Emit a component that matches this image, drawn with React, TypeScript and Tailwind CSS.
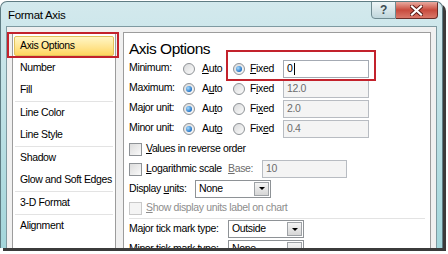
import React from "react";

const navItems = [
    { label: "Axis Options", active: true },
    { label: "Number" },
    { label: "Fill", sep: true },
    { label: "Line Color" },
    { label: "Line Style", sep: true },
    { label: "Shadow" },
    { label: "Glow and Soft Edges", sep: true },
    { label: "3-D Format", sep: true },
    { label: "Alignment" },
];

const Radio = ({ checked }: { checked?: boolean }) => (
    <span className="w-[12px] h-[12px] shrink-0 rounded-full border border-[#8e9296] bg-linear-to-br from-[#d9dadb] to-[#fbfbfb] flex items-center justify-center">
        {checked && (
            <span className="w-[6px] h-[6px] rounded-full bg-[radial-gradient(circle_at_35%_35%,#a7dcff,#1a6cc0_75%)]" />
        )}
    </span>
);

const Check = ({ disabled }: { disabled?: boolean }) => (
    <span
        className={
            disabled
                ? "w-[13px] h-[13px] shrink-0 border border-[#c9c9c9] bg-[#f4f4f4]"
                : "w-[13px] h-[13px] shrink-0 border border-[#8e9296] bg-linear-to-br from-[#dcdcdc] to-[#fafafa]"
        }
    />
);

const TextBox = ({ value, disabled, w = "w-[86px]" }: { value: string; disabled?: boolean; w?: string }) => (
    <div
        className={`${w} h-[18px] border flex items-center pl-[3px] ${
            disabled ? "border-[#b8bcc2] bg-[#f4f4f4] text-[#6d6d6d]" : "border-[#a4aab3] bg-white text-black"
        }`}
    >
        {value}
        {!disabled && <span className="w-[1px] h-[12px] bg-black ml-[1px]" />}
    </div>
);

const Select = ({ value }: { value: string }) => (
    <div className="w-[76px] h-[18px] border border-[#8e9296] bg-white flex items-center justify-between pl-[3px] pr-[1px]">
        <span>{value}</span>
        <span className="w-[15px] h-[14px] border border-[#9ea2a6] bg-linear-to-b from-[#f4f4f4] to-[#d6d6d6] flex items-center justify-center">
            <span className="w-0 h-0 border-l-[3px] border-r-[3px] border-t-[3px] border-l-transparent border-r-transparent border-t-black" />
        </span>
    </div>
);

const AutoFixed = ({
    label,
    autoLabel,
    fixedLabel,
    fixed,
    value,
}: {
    label: string;
    autoLabel: React.ReactNode;
    fixedLabel: React.ReactNode;
    fixed?: boolean;
    value: string;
}) => (
    <div className="h-[20px] flex items-center">
        <span className="w-[54px] mb-[3px]">{label}</span>
        <div className="w-[50px] flex items-center gap-[7px]">
            <Radio checked={!fixed} />
            <span>{autoLabel}</span>
        </div>
        <div className="w-[50px] flex items-center gap-[5px]">
            <Radio checked={fixed} />
            <span>{fixedLabel}</span>
        </div>
        <TextBox value={value} disabled={!fixed} />
    </div>
);

const App = () => {
    return (
        <div className="relative w-[448px] h-[254px] bg-white overflow-hidden whitespace-nowrap text-[10.5px] tracking-[-0.35px] text-black font-['Liberation_Sans',Arial,sans-serif]">
            <div className="mt-[1px] w-[443px] h-[247px] rounded-t-[7px] border border-b-0 border-[#5f7c83] bg-linear-to-b from-[#d3e9ed] to-[#a3d6db] shadow-[3px_3px_0_#3b3b3b] flex flex-col overflow-hidden">
                {/* title bar */}
                <div className="h-[24px] flex items-start justify-between pl-[7px] pr-[4px]">
                    <span className="pt-[5px] text-[11.5px] tracking-[-0.3px]">Format Axis</span>
                    <div className="flex">
                        <div className="w-[25px] h-[18px] -mt-[1px] border border-[#6f8a91] rounded-bl-[4px] bg-linear-to-b from-[#eef5f7] to-[#bfd6dc] flex items-center justify-center text-[12px] font-bold text-[#3d4b52]">
                            ?
                        </div>
                        <div className="w-[42px] h-[18px] -mt-[1px] border border-l-0 border-[#6a2b26] rounded-br-[4px] bg-linear-to-b from-[#e8a99f] via-[#c84a3d] to-[#d9786a] flex items-center justify-center">
                            <svg width="13" height="11" viewBox="0 0 13 11">
                                <path d="M2 1.5 L11 9.5 M11 1.5 L2 9.5" stroke="#5a1a14" strokeWidth="4" strokeLinecap="square" />
                                <path d="M2 1.5 L11 9.5 M11 1.5 L2 9.5" stroke="#ffffff" strokeWidth="2.2" strokeLinecap="square" />
                            </svg>
                        </div>
                    </div>
                </div>

                {/* frame + client */}
                <div className="flex-1 flex px-[5px] min-h-0">
                    <div className="flex-1 flex gap-[7px] bg-[#f0f0f0] border border-b-0 border-[#7f9aa1] pl-[5px] pr-[5px] pt-[5px] min-h-0">
                        {/* nav list */}
                        <div className="w-[104px] bg-white border border-b-0 border-[#9c9c9c] pt-[2px] px-[1px]">
                            {navItems.map((item) => (
                                <React.Fragment key={item.label}>
                                    <div className="h-[22px] flex items-center">
                                        {item.active ? (
                                            <div className="w-full h-[20px] rounded-[2px] border border-[#e2c25c] bg-linear-to-b from-[#fff6c4] to-[#ffd65e] flex items-center pl-[5px]">
                                                {item.label}
                                            </div>
                                        ) : (
                                            <span className="pl-[6px]">{item.label}</span>
                                        )}
                                    </div>
                                    {item.sep && <div className="mx-[1px] h-[1px] bg-[#e3e3e3]" />}
                                </React.Fragment>
                            ))}
                        </div>

                        {/* options panel */}
                        <div className="relative flex-1 bg-white border border-b-0 border-[#9c9c9c] pl-[5px] pr-[4px]">
                            <div className="mt-[6px] h-[20px] leading-[20px] text-[15.5px] tracking-[-0.5px]">Axis Options</div>
                            <AutoFixed
                                label="Minimum:"
                                autoLabel={<><u>A</u>uto</>}
                                fixedLabel={<><u>F</u>ixed</>}
                                fixed
                                value="0"
                            />
                            <AutoFixed
                                label="Maximum:"
                                autoLabel={<>A<u>u</u>to</>}
                                fixedLabel={<>F<u>i</u>xed</>}
                                value="12.0"
                            />
                            <AutoFixed
                                label="Major unit:"
                                autoLabel={<>Au<u>t</u>o</>}
                                fixedLabel={<>Fi<u>x</u>ed</>}
                                value="2.0"
                            />
                            <AutoFixed
                                label="Minor unit:"
                                autoLabel={<>Aut<u>o</u></>}
                                fixedLabel={<>Fix<u>e</u>d</>}
                                value="0.4"
                            />
                            <div className="h-[20px] flex items-center gap-[4px]">
                                <Check />
                                <span>
                                    <u>V</u>alues in reverse order
                                </span>
                            </div>
                            <div className="h-[20px] flex items-center">
                                <div className="w-[99px] flex items-center gap-[4px]">
                                    <Check />
                                    <span>
                                        <u>L</u>ogarithmic scale
                                    </span>
                                </div>
                                <span className="w-[34px] text-[#6d6d6d]">
                                    <u>B</u>ase:
                                </span>
                                <TextBox value="10" disabled w="w-[85px]" />
                            </div>
                            <div className="h-[19px] flex items-center">
                                <span className="w-[66px]">
                                    Display <u>u</u>nits:
                                </span>
                                <Select value="None" />
                            </div>
                            <div className="h-[20px] flex items-center gap-[4px] text-[#8d8d8d]">
                                <Check disabled />
                                <span>
                                    <u>S</u>how display units label on chart
                                </span>
                            </div>
                            <div className="h-[1px] bg-[#e3e3e3] mr-[1px]" />
                            <div className="h-[20px] flex items-center">
                                <span className="w-[99px]">Major tick mark type:</span>
                                <Select value="Outside" />
                            </div>
                            <div className="h-[20px] flex items-center">
                                <span className="w-[99px]">Minor tick mark type:</span>
                                <Select value="None" />
                            </div>

                            {/* callout around Fixed 0 */}
                            <div className="absolute left-[102px] top-[17px] w-[150px] h-[31px] border-2 border-[#c3222c]" />
                        </div>
                    </div>
                </div>
            </div>
            {/* callout around Axis Options nav item */}
            <div className="absolute left-[7px] top-[32px] w-[112px] h-[26px] border-2 border-[#c3222c]" />
        </div>
    );
};

export default App;
